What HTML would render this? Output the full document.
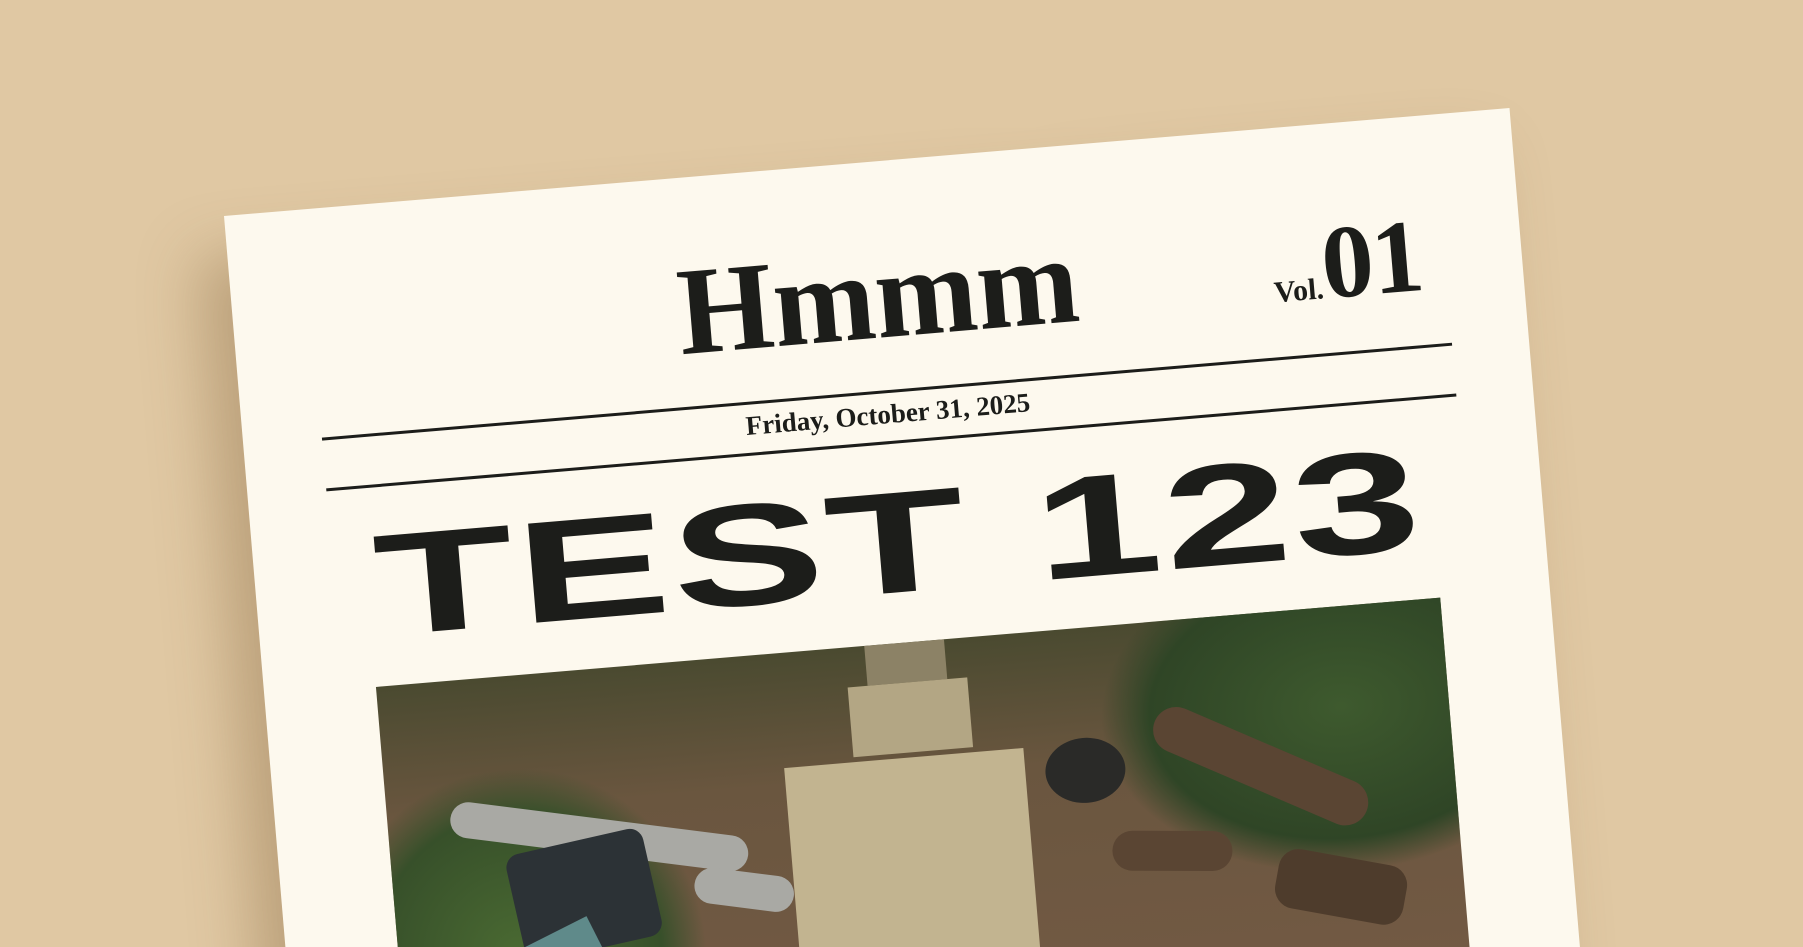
<!DOCTYPE html>
<html><head><meta charset="utf-8"><style>
html,body{margin:0;padding:0;width:1803px;height:947px;overflow:hidden}
body{background:#e0c8a3;position:relative}
.paper{position:absolute;left:224px;top:216px;width:1290px;height:850px;background:#fdf9ee;transform-origin:0 0;transform:rotate(-4.8deg);box-shadow:-30px 40px 60px rgba(120,90,50,.35);overflow:hidden}
.t{position:absolute;color:#1c1d1a;font-family:"Liberation Serif",serif;white-space:nowrap}
.line{position:absolute;left:79px;width:1134px;height:3px;background:#1c1d1a}
.photo{position:absolute;left:112px;top:482px;width:1068px;height:380px;overflow:hidden;
background:
radial-gradient(ellipse 260px 260px at 120px 280px,#4a6a32 0,#37502a 55%,transparent 72%),
radial-gradient(ellipse 320px 220px at 960px 100px,#3e5a2e 0,#2f4526 60%,transparent 75%),
linear-gradient(180deg,#4a4a30 0,#6a563f 35%,#735a44 100%)}
</style></head><body>
<div class="paper">
 <div class="t" style="left:0;width:1290px;text-align:center;top:64px;font-size:125px;font-weight:bold;transform:scaleX(.98)">Hmmm</div>
 <div class="t" style="left:1040px;top:80px;font-weight:bold"><span style="font-size:30px">Vol.</span><span style="font-size:104px;letter-spacing:-2px">01</span></div>
 <div class="line" style="top:229px"></div>
 <div class="t" style="left:0;width:1290px;text-align:center;top:238px;font-size:27px;font-weight:bold">Friday, October 31, 2025</div>
 <div class="line" style="top:280px"></div>
 <div class="t" style="left:0;width:1290px;text-align:center;top:302px;font-family:'Liberation Sans',sans-serif;font-weight:bold;font-size:152px;line-height:160px;transform:scaleX(1.5) scaleY(.95);letter-spacing:2px">TEST 123</div>
 <div class="photo">
  <div style="position:absolute;left:490px;top:0;width:80px;height:40px;background:#8c8266"></div>
  <div style="position:absolute;left:470px;top:40px;width:120px;height:70px;background:#b3a684"></div>
  <div style="position:absolute;left:400px;top:115px;width:240px;height:200px;background:#c2b490"></div>
  <div style="position:absolute;left:410px;top:320px;width:270px;height:300px;background:#b9ab88"></div>
  <div style="position:absolute;left:660px;top:110px;width:80px;height:65px;border-radius:50%;background:#2a2a28"></div>
  <div style="position:absolute;left:760px;top:130px;width:230px;height:46px;border-radius:23px;background:#5a4533;transform:rotate(28deg)"></div>
  <div style="position:absolute;left:720px;top:210px;width:120px;height:40px;border-radius:20px;background:#5a4533;transform:rotate(5deg)"></div>
  <div style="position:absolute;left:880px;top:250px;width:130px;height:60px;border-radius:20px;background:#4e3c2c;transform:rotate(15deg)"></div>
  <div style="position:absolute;left:60px;top:150px;width:300px;height:36px;border-radius:18px;background:#a9a9a4;transform:rotate(12deg)"></div>
  <div style="position:absolute;left:120px;top:170px;width:140px;height:110px;border-radius:14px;background:#2c3236;transform:rotate(-8deg)"></div>
  <div style="position:absolute;left:170px;top:250px;width:70px;height:250px;background:#5f8a8a;transform:rotate(-22deg)"></div>
  <div style="position:absolute;left:300px;top:215px;width:100px;height:36px;border-radius:18px;background:#a9a9a4;transform:rotate(12deg)"></div>
 </div>
</div>
</body></html>
